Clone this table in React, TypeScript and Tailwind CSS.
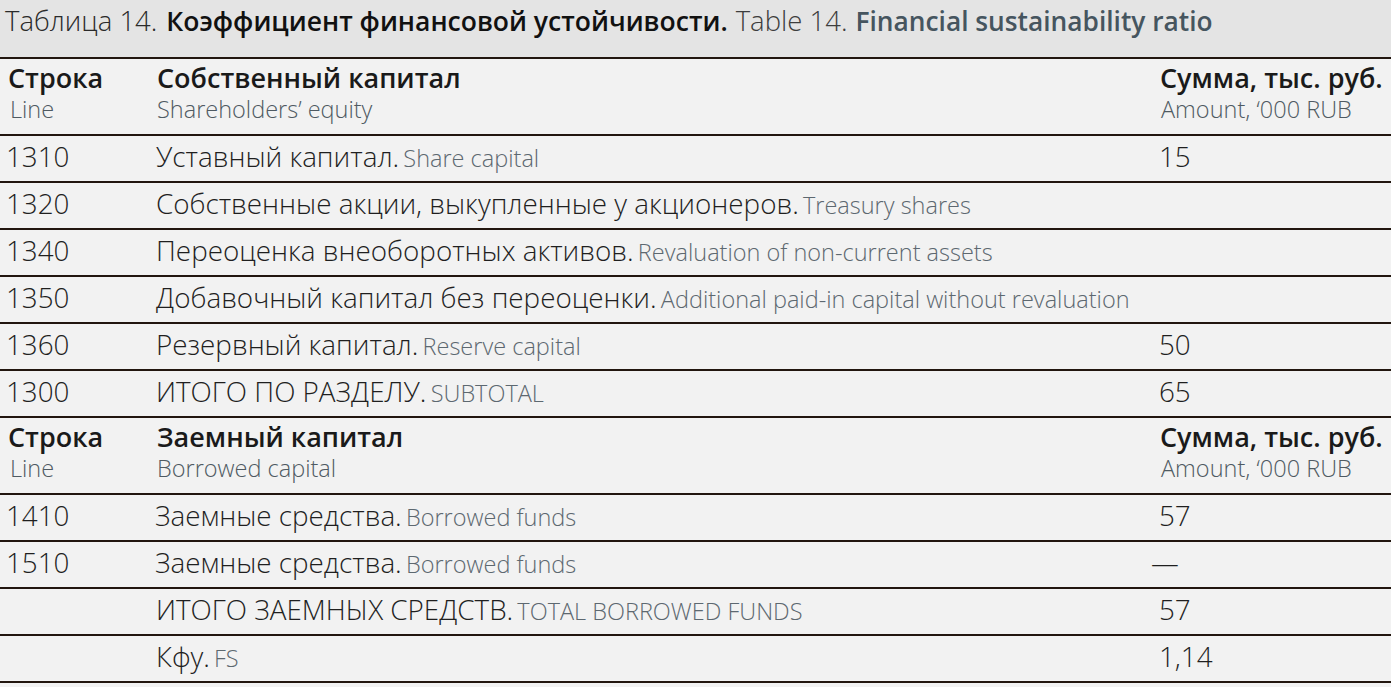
import React from "react";

type Row = { code: string; ru: string; en: string; value: string; shift?: boolean };

const equity: Row[] = [
  { code: "1310", ru: "Уставный капитал.", en: "Share capital", value: "15" },
  { code: "1320", ru: "Собственные акции, выкупленные у акционеров.", en: "Treasury shares", value: "" },
  { code: "1340", ru: "Переоценка внеоборотных активов.", en: "Revaluation of non-current assets", value: "" },
  { code: "1350", ru: "Добавочный капитал без переоценки.", en: "Additional paid-in capital without revaluation", value: "" },
  { code: "1360", ru: "Резервный капитал.", en: "Reserve capital", value: "50" },
  { code: "1300", ru: "ИТОГО ПО РАЗДЕЛУ.", en: "SUBTOTAL", value: "65" },
];

const borrowed: Row[] = [
  { code: "1410", ru: "Заемные средства.", en: "Borrowed funds", value: "57", shift: true },
  { code: "1510", ru: "Заемные средства.", en: "Borrowed funds", value: "—", shift: true },
  { code: "", ru: "ИТОГО ЗАЕМНЫХ СРЕДСТВ.", en: "TOTAL BORROWED FUNDS", value: "57" },
  { code: "", ru: "Кфу.", en: "FS", value: "1,14" },
];

const HeaderRow = ({ title, sub }: { title: string; sub: string }) => (
  <div className="grid grid-cols-[150px_1fr_234px] h-[77px] border-b-2 border-[#22160f] pt-[2px]">
    <div className="pl-[8px]">
      <div className="font-semibold text-[27px] leading-[34px] text-[#1a1a1a]">Строка</div>
      <div className="font-light text-[23.5px] leading-[28px] text-[#4f5a62] pl-[2px]">Line</div>
    </div>
    <div className="pl-[7px]">
      <div className="font-semibold text-[27px] leading-[34px] text-[#1a1a1a]">{title}</div>
      <div className="font-light text-[23.5px] leading-[28px] text-[#4f5a62]">{sub}</div>
    </div>
    <div className="pl-[3px]">
      <div className="font-semibold text-[27px] leading-[34px] text-[#1a1a1a]">Сумма, тыс. руб.</div>
      <div className="font-light text-[23.5px] leading-[28px] text-[#4f5a62] pl-[1px]">Amount, ‘000 RUB</div>
    </div>
  </div>
);

const DataRow = ({ row }: { row: Row }) => (
  <div className="grid grid-cols-[150px_1fr_234px] h-[47px] items-center border-b-2 border-[#22160f] pb-[3px]">
    <div className="pl-[6px] font-light text-[27.8px] text-[#1f1f1f]">{row.code}</div>
    <div className={`whitespace-nowrap ${row.shift ? "pl-[5px]" : "pl-[6px]"}`}>
      <span className="font-light text-[27.8px] text-[#1f1f1f]">{row.ru}</span>{" "}
      <span className="font-light text-[23.5px] text-[#5d6870]">{row.en}</span>
    </div>
    <div className={`font-light text-[27.8px] text-[#1f1f1f] ${row.value === "—" ? "-ml-[6px]" : "pl-[2px]"}`}>
      {row.value}
    </div>
  </div>
);

export default function App() {
  return (
    <div className="w-[1391px] min-h-[687px] bg-[#f2f2f2] font-['Open_Sans',sans-serif]">
      <div className="h-[59px] bg-[#e4e4e4] border-b-2 border-[#22160f] px-[5px] pt-[3px] whitespace-nowrap text-[27px] leading-[36px]">
        <span className="font-light text-[27.5px] text-[#2a2a2a]">Таблица 14.</span>
        <span className="ml-[9px] font-semibold text-[26.5px] text-[#111111]">Коэффициент финансовой устойчивости.</span>
        <span className="ml-[8px] font-light text-[27.5px] text-[#3d3d3d]">Table 14.</span>
        <span className="ml-[8px] font-semibold text-[26.3px] text-[#46555f]">Financial sustainability ratio</span>
      </div>
      <HeaderRow title="Собственный капитал" sub="Shareholders’ equity" />
      {equity.map((r) => (
        <DataRow key={r.code} row={r} />
      ))}
      <HeaderRow title="Заемный капитал" sub="Borrowed capital" />
      {borrowed.map((r, i) => (
        <DataRow key={i} row={r} />
      ))}
    </div>
  );
}
